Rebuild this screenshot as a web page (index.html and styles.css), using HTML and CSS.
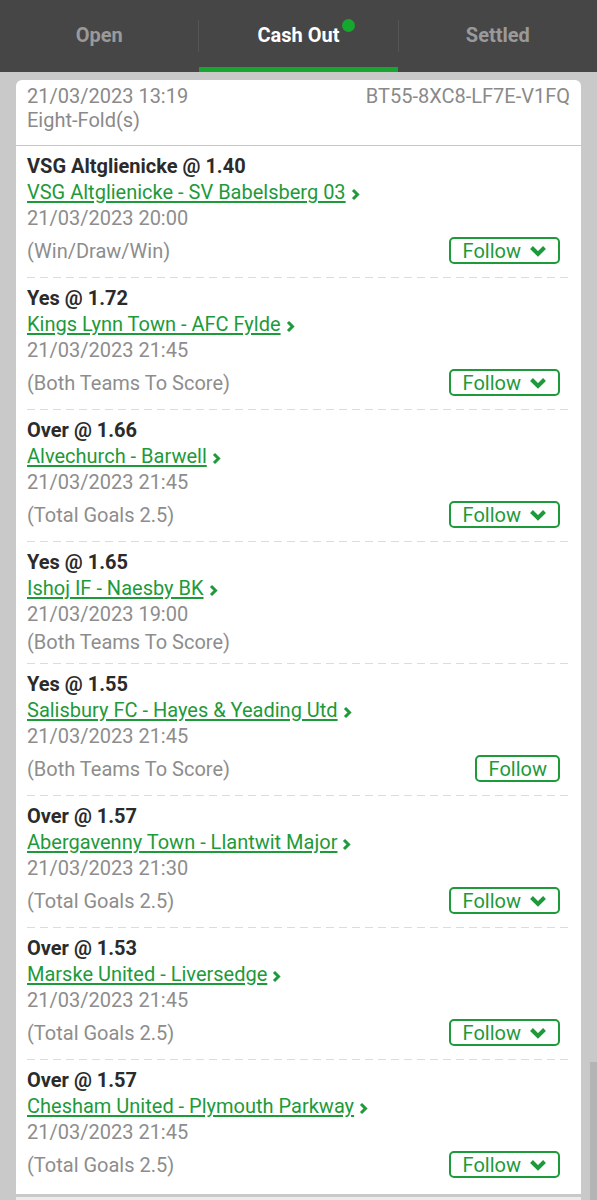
FILE: index.html
```html
<!DOCTYPE html>
<html lang="en">
<head>
    <meta charset="UTF-8">
    <meta name="viewport" content="width=device-width, initial-scale=1.0">
    <title>My Bets - Cash Out</title>
    <link rel="stylesheet" href="styles.css">
</head>
<body>
    <div class="tabs">
        <div class="tab">Open</div>
        <div class="divider"></div>
        <div class="tab active"><span class="tab-label">Cash Out</span></div>
        <div class="divider"></div>
        <div class="tab">Settled</div>
    </div>

    <div class="bets">
        <div class="bet-card">
            <div class="bet-header">
                <span>21/03/2023 13:19</span>
                <span class="bet-ref">BT55-8XC8-LF7E-V1FQ</span>
                <span>Eight-Fold(s)</span>
            </div>

            <div class="selection">
                <div class="sel-title">VSG Altglienicke @ 1.40</div>
                <div class="sel-line"><a href="#" class="event-link">VSG Altglienicke - SV Babelsberg 03</a><svg class="link-arrow" width="9" height="13" viewBox="0 0 9 13"><path d="M2 2 L6.5 6.5 L2 11" fill="none" stroke="#1d9a3a" stroke-width="3"/></svg></div>
                <div class="sel-line sel-time">21/03/2023 20:00</div>
                <div class="sel-market">
                    <span>(Win/Draw/Win)</span>
                    <button class="follow-button">Follow<svg class="follow-arrow" width="18" height="12" viewBox="0 0 18 12"><path d="M2.5 2.5 L9 9 L15.5 2.5" fill="none" stroke="#1d9a3a" stroke-width="4"/></svg></button>
                </div>
            </div>

            <div class="selection">
                <div class="sel-title">Yes @ 1.72</div>
                <div class="sel-line"><a href="#" class="event-link">Kings Lynn Town - AFC Fylde</a><svg class="link-arrow" width="9" height="13" viewBox="0 0 9 13"><path d="M2 2 L6.5 6.5 L2 11" fill="none" stroke="#1d9a3a" stroke-width="3"/></svg></div>
                <div class="sel-line sel-time">21/03/2023 21:45</div>
                <div class="sel-market">
                    <span>(Both Teams To Score)</span>
                    <button class="follow-button">Follow<svg class="follow-arrow" width="18" height="12" viewBox="0 0 18 12"><path d="M2.5 2.5 L9 9 L15.5 2.5" fill="none" stroke="#1d9a3a" stroke-width="4"/></svg></button>
                </div>
            </div>

            <div class="selection">
                <div class="sel-title">Over @ 1.66</div>
                <div class="sel-line"><a href="#" class="event-link">Alvechurch - Barwell</a><svg class="link-arrow" width="9" height="13" viewBox="0 0 9 13"><path d="M2 2 L6.5 6.5 L2 11" fill="none" stroke="#1d9a3a" stroke-width="3"/></svg></div>
                <div class="sel-line sel-time">21/03/2023 21:45</div>
                <div class="sel-market">
                    <span>(Total Goals 2.5)</span>
                    <button class="follow-button">Follow<svg class="follow-arrow" width="18" height="12" viewBox="0 0 18 12"><path d="M2.5 2.5 L9 9 L15.5 2.5" fill="none" stroke="#1d9a3a" stroke-width="4"/></svg></button>
                </div>
            </div>

            <div class="selection">
                <div class="sel-title">Yes @ 1.65</div>
                <div class="sel-line"><a href="#" class="event-link">Ishoj IF - Naesby BK</a><svg class="link-arrow" width="9" height="13" viewBox="0 0 9 13"><path d="M2 2 L6.5 6.5 L2 11" fill="none" stroke="#1d9a3a" stroke-width="3"/></svg></div>
                <div class="sel-line sel-time">21/03/2023 19:00</div>
                <div class="sel-market">
                    <span>(Both Teams To Score)</span>
                </div>
            </div>

            <div class="selection">
                <div class="sel-title">Yes @ 1.55</div>
                <div class="sel-line"><a href="#" class="event-link">Salisbury FC - Hayes &amp; Yeading Utd</a><svg class="link-arrow" width="9" height="13" viewBox="0 0 9 13"><path d="M2 2 L6.5 6.5 L2 11" fill="none" stroke="#1d9a3a" stroke-width="3"/></svg></div>
                <div class="sel-line sel-time">21/03/2023 21:45</div>
                <div class="sel-market">
                    <span>(Both Teams To Score)</span>
                    <button class="follow-button plain">Follow</button>
                </div>
            </div>

            <div class="selection">
                <div class="sel-title">Over @ 1.57</div>
                <div class="sel-line"><a href="#" class="event-link">Abergavenny Town - Llantwit Major</a><svg class="link-arrow" width="9" height="13" viewBox="0 0 9 13"><path d="M2 2 L6.5 6.5 L2 11" fill="none" stroke="#1d9a3a" stroke-width="3"/></svg></div>
                <div class="sel-line sel-time">21/03/2023 21:30</div>
                <div class="sel-market">
                    <span>(Total Goals 2.5)</span>
                    <button class="follow-button">Follow<svg class="follow-arrow" width="18" height="12" viewBox="0 0 18 12"><path d="M2.5 2.5 L9 9 L15.5 2.5" fill="none" stroke="#1d9a3a" stroke-width="4"/></svg></button>
                </div>
            </div>

            <div class="selection">
                <div class="sel-title">Over @ 1.53</div>
                <div class="sel-line"><a href="#" class="event-link">Marske United - Liversedge</a><svg class="link-arrow" width="9" height="13" viewBox="0 0 9 13"><path d="M2 2 L6.5 6.5 L2 11" fill="none" stroke="#1d9a3a" stroke-width="3"/></svg></div>
                <div class="sel-line sel-time">21/03/2023 21:45</div>
                <div class="sel-market">
                    <span>(Total Goals 2.5)</span>
                    <button class="follow-button">Follow<svg class="follow-arrow" width="18" height="12" viewBox="0 0 18 12"><path d="M2.5 2.5 L9 9 L15.5 2.5" fill="none" stroke="#1d9a3a" stroke-width="4"/></svg></button>
                </div>
            </div>

            <div class="selection last">
                <div class="sel-title">Over @ 1.57</div>
                <div class="sel-line"><a href="#" class="event-link">Chesham United - Plymouth Parkway</a><svg class="link-arrow" width="9" height="13" viewBox="0 0 9 13"><path d="M2 2 L6.5 6.5 L2 11" fill="none" stroke="#1d9a3a" stroke-width="3"/></svg></div>
                <div class="sel-line sel-time">21/03/2023 21:45</div>
                <div class="sel-market">
                    <span>(Total Goals 2.5)</span>
                    <button class="follow-button">Follow<svg class="follow-arrow" width="18" height="12" viewBox="0 0 18 12"><path d="M2.5 2.5 L9 9 L15.5 2.5" fill="none" stroke="#1d9a3a" stroke-width="4"/></svg></button>
                </div>
            </div>
        </div>
        <div class="next-card"></div>
    </div>

    <div class="scroll-thumb"></div>
</body>
</html>
```

FILE: styles.css
```css
body {
    font-family: Roboto, "Liberation Sans", Arial, sans-serif;
    background-color: #c9c9c9;
    margin: 0;
    overflow: hidden;
}
.tabs {
    display: flex;
    height: 72px;
    background-color: #464646;
}
.tab {
    flex: 1;
    display: flex;
    align-items: center;
    justify-content: center;
    padding-bottom: 2px;
    font-size: 20px;
    font-weight: bold;
    color: #9a9a9a;
}
.tab.active {
    color: #fff;
    box-shadow: inset 0 -5px 0 #17a52f;
}
.tab-label {
    position: relative;
}
.tab-label::after {
    content: "";
    position: absolute;
    right: -16px;
    top: -4px;
    width: 13px;
    height: 13px;
    border-radius: 50%;
    background-color: #14a82c;
}
.divider {
    width: 1px;
    height: 32px;
    margin-top: 20px;
    background-color: #555;
}
.bets {
    padding: 8px 16px 0 16px;
}
.bet-card {
    background-color: #fff;
    border-radius: 6px 6px 0 0;
    padding-bottom: 2px;
}
.bet-header {
    display: grid;
    grid-template-columns: 1fr auto;
    padding: 4px 11px 13px 11px;
    font-size: 20px;
    line-height: 24px;
    color: #8a8a8a;
    border-bottom: 1px solid #c6c6c6;
}
.bet-ref {
    text-align: right;
}
.selection {
    margin: 0 11px;
    padding: 7px 0 9px 0;
    font-size: 20px;
    line-height: 26px;
    background-image: linear-gradient(to right, #dcdcdc 8px, transparent 8px);
    background-size: 13px 1px;
    background-repeat: repeat-x;
    background-position: left bottom;
}
.selection.last {
    background-image: none;
}
.sel-title {
    font-weight: bold;
    color: #2b2b2b;
}
.sel-line {
    display: flex;
    align-items: center;
}
.event-link {
    color: #1d9a3a;
    text-decoration: underline;
    text-underline-offset: 2px;
}
.link-arrow {
    margin-left: 5px;
    margin-top: 5px;
}
.sel-time {
    color: #8d8d8d;
}
.sel-market {
    display: flex;
    align-items: center;
    justify-content: space-between;
    min-height: 26px;
    margin-top: 2px;
    color: #8d8d8d;
}
.follow-button {
    display: flex;
    align-items: center;
    height: 27px;
    margin: 4px 10px 5px 0;
    padding: 0 11px 0 12px;
    background-color: #fff;
    border: 2px solid #1d9a3a;
    border-radius: 5px;
    font-family: Roboto, "Liberation Sans", Arial, sans-serif;
    font-size: 20px;
    color: #1d9a3a;
    cursor: pointer;
}
.follow-arrow {
    margin-left: 8px;
}
.next-card {
    height: 10px;
    margin-top: 3px;
    background-color: #ebebeb;
}
.scroll-thumb {
    position: fixed;
    right: 0;
    top: 1062px;
    width: 7px;
    height: 138px;
    background-color: #b4b4b4;
}
```
